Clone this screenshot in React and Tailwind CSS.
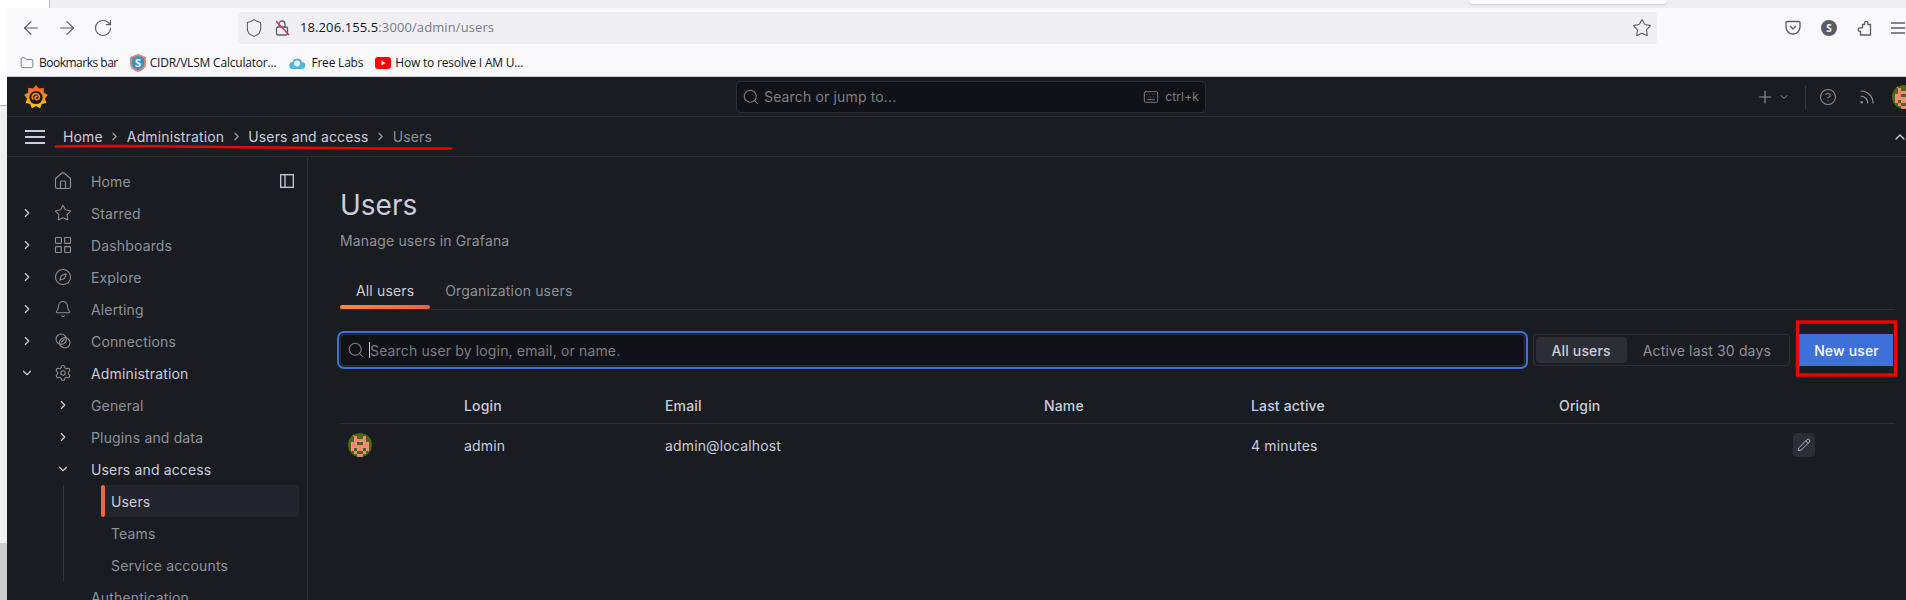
import {
  ArrowLeft,
  ArrowRight,
  Bell,
  ChevronDown,
  ChevronRight,
  ChevronUp,
  CircleHelp,
  Compass,
  Folder,
  Home,
  Keyboard,
  LayoutGrid,
  Pencil,
  Plus,
  RotateCw,
  Rss,
  Search,
  Settings,
  Shield,
  Star,
} from "lucide-react";

const IDENTICON = [
  "01000000",
  "00100100",
  "00111100",
  "01100110",
  "01111110",
  "01011010",
  "00100100",
  "00011000",
];

const Identicon = ({ className }) => (
  <svg viewBox="0 0 24 24" className={className}>
    <clipPath id="avatar-clip">
      <circle cx="12" cy="12" r="12" />
    </clipPath>
    <g clipPath="url(#avatar-clip)">
      <rect width="24" height="24" fill="#4a6a10" />
      {IDENTICON.map((row, y) =>
        row
          .split("")
          .map((cell, x) =>
            cell === "1" ? (
              <rect key={`${x}-${y}`} x={x * 3} y={y * 3} width="3" height="3" fill="#f4897f" />
            ) : null
          )
      )}
    </g>
  </svg>
);

const gearPoints = () => {
  const pts = [];
  for (let i = 0; i < 18; i++) {
    const r = i % 2 === 0 ? 12 : 9;
    const a = (i / 18) * Math.PI * 2 - Math.PI / 2;
    pts.push(`${12 + r * Math.cos(a)},${12 + r * Math.sin(a)}`);
  }
  return pts.join(" ");
};

const GrafanaLogo = () => (
  <svg viewBox="0 0 24 24" className="w-6 h-6 shrink-0">
    <defs>
      <linearGradient id="logo-grad" x1="0" y1="0" x2="0" y2="1">
        <stop offset="0" stopColor="#f05a28" />
        <stop offset="1" stopColor="#fbca0a" />
      </linearGradient>
    </defs>
    <polygon points={gearPoints()} fill="url(#logo-grad)" />
    <circle cx="12" cy="12.5" r="6.6" fill="#191c21" />
    <path
      d="M9 14.5a3.6 3.6 0 1 1 6.4-2.2c0 2.4-3.6 3.2-4.4 1a1.6 1.6 0 0 1 2.4-1.6"
      fill="none"
      stroke="#f5862a"
      strokeWidth="1.7"
    />
  </svg>
);

const ConnectionsIcon = () => (
  <svg viewBox="0 0 16 16" fill="none" stroke="currentColor" strokeWidth="1.1" className="w-4 h-4">
    <circle cx="6.2" cy="6.2" r="5.2" />
    <circle cx="9.8" cy="9.8" r="5.2" />
    <path d="M6 9.5l3.5-3.5" />
  </svg>
);

const NavRow = ({ icon: Icon, iconSize = 18, label, chevron, active, children }) => (
  <div className="flex items-center h-8">
    <div className="w-10 flex justify-center text-[#ccccdc]">
      {chevron === "right" && <ChevronRight size={14} />}
      {chevron === "down" && <ChevronDown size={14} />}
    </div>
    <div className="w-8 flex justify-center text-[#8e9099]">{Icon && <Icon size={iconSize} strokeWidth={1.4} />}</div>
    <span className={`ml-3 ${active ? "text-[#ccccdc]" : "text-[#8f9199]"}`}>{label}</span>
    {children}
  </div>
);

const SubRow = ({ label, chevron, active }) => (
  <div className="flex items-center h-8 pl-10">
    <div className="w-8 flex justify-center text-[#ccccdc]">
      {chevron === "right" && <ChevronRight size={14} />}
      {chevron === "down" && <ChevronDown size={14} />}
    </div>
    <span className={`ml-3 ${active ? "text-[#ccccdc]" : "text-[#8f9199]"}`}>{label}</span>
  </div>
);

const Crumb = ({ children }) => (
  <>
    <span>{children}</span>
    <span className="w-6 flex justify-center text-[#a0a2ab]">
      <ChevronRight size={13} />
    </span>
  </>
);

const BrowserChrome = () => (
  <div className="h-[77px] shrink-0 bg-[#f9f9fb] border-b border-[#cfcfd8] text-[#15141a] font-['Open_Sans',sans-serif]">
    <div className="h-2 bg-[#f0f0f4] flex">
      <div className="w-[43px] h-2 bg-white border-r border-[#b8b8b8]" />
      <div className="ml-[1419px] w-[198px] h-1 bg-white rounded-b shadow" />
    </div>
    <div className="flex items-center h-9 pt-1">
      <div className="flex items-center pl-[6px] text-[#5b5b66]">
        <div className="w-9 flex justify-center">
          <ArrowLeft size={22} strokeWidth={1.3} />
        </div>
        <div className="w-9 flex justify-center">
          <ArrowRight size={22} strokeWidth={1.3} />
        </div>
        <div className="w-9 flex justify-center">
          <RotateCw size={20} strokeWidth={1.4} />
        </div>
      </div>
      <div className="ml-[117px] w-[1421px] h-8 rounded bg-[#f0f0f4] flex items-center pl-[6px] pr-[5px]">
        <Shield size={20} strokeWidth={1.3} className="text-[#5b5b66]" />
        <svg viewBox="0 0 16 16" fill="none" className="w-4 h-4 ml-[10px]">
          <rect x="2.5" y="7" width="11" height="8" rx="1.5" stroke="#5b5b66" strokeWidth="1.3" />
          <path d="M5 7V4a3 3 0 0 1 6 0v3" stroke="#5b5b66" strokeWidth="1.3" />
          <path d="M2 1l13 14" stroke="#e22850" strokeWidth="1.3" />
        </svg>
        <span className="ml-[10px] text-[13px] tracking-[0.1px]">
          18.206.155.5<span className="text-[#7a7a85]">:3000/admin/users</span>
        </span>
        <Star size={20} strokeWidth={1.3} className="ml-auto text-[#5b5b66]" />
      </div>
      <div className="ml-[128px] flex items-center text-[#5b5b66]">
        <svg viewBox="0 0 16 16" fill="none" stroke="currentColor" strokeWidth="1.3" className="w-4 h-4">
          <path d="M2 1.5h12a1 1 0 0 1 1 1V7a7 7 0 0 1-14 0V2.5a1 1 0 0 1 1-1z" />
          <path d="M5 6l3 3 3-3" />
        </svg>
        <div className="ml-5 w-4 h-4 rounded-full bg-[#5b5b66] flex items-center justify-center text-white text-[10px] font-bold">
          S
        </div>
        <svg viewBox="0 0 16 16" fill="none" stroke="currentColor" strokeWidth="1.3" className="w-4 h-4 ml-5">
          <path d="M5.5 4.5H7.5V3a1.7 1.7 0 0 1 3.4 0V4.5H13.5V15H3.5V11.5H3a1.8 1.8 0 0 1 0-3.6h2.5z" />
        </svg>
        <svg viewBox="0 0 16 16" stroke="currentColor" strokeWidth="1.3" className="w-4 h-4 ml-[17px]">
          <path d="M1 3h14M1 8h14M1 13h14" />
        </svg>
      </div>
    </div>
    <div className="flex items-center h-8 pl-[13px] pt-[5px] text-[12px] tracking-[-0.2px]">
      <Folder size={14} strokeWidth={1.3} className="text-[#5b5b66]" />
      <span className="ml-[5px] tracking-[-0.5px]">Bookmarks bar</span>
      <svg viewBox="0 0 16 18" className="w-4 h-[18px] ml-3">
        <path d="M8 0l8 3v7c0 4-4 7-8 8-4-1-8-4-8-8V3z" fill="#cf8a80" />
        <path d="M2 4l6-2 6 2v6c0 3-3 5-6 6-3-1-6-3-6-6z" fill="#3f8fc4" />
        <text x="8" y="13" textAnchor="middle" fontSize="11" fontWeight="700" fill="#fff">
          S
        </text>
      </svg>
      <span className="ml-1">CIDR/VLSM Calculator...</span>
      <svg viewBox="0 0 16 14" className="w-4 h-[14px] ml-[13px]">
        <path d="M4 13a3.5 3.5 0 0 1-.5-7A5 5 0 0 1 13 6a3.5 3.5 0 0 1-.5 7z" fill="#4fb3e0" />
        <circle cx="8" cy="7.5" r="3" fill="#e6f5fb" />
      </svg>
      <span className="ml-[6px]">Free Labs</span>
      <svg viewBox="0 0 16 14" className="w-4 h-[14px] ml-3">
        <rect width="16" height="12" y="1" rx="3" fill="#ff0000" />
        <path d="M6.5 4.5v5l4-2.5z" fill="#fff" />
      </svg>
      <span className="ml-1">How to resolve I AM U...</span>
    </div>
  </div>
);

const GrafanaHeader = () => (
  <>
    <div className="h-10 shrink-0 flex items-center border-b border-[#2c2f34]">
      <div className="w-[729px] pl-[17px]">
        <GrafanaLogo />
      </div>
      <div className="w-[470px] h-8 bg-[#111217] border border-[#2c2f34] rounded-sm flex items-center pl-[5px] pr-[6px] text-[#7c7e86]">
        <Search size={18} strokeWidth={1.4} />
        <span className="ml-1">Search or jump to...</span>
        <Keyboard size={16} strokeWidth={1.4} className="ml-auto" />
        <span className="ml-1.5 text-[12px]">ctrl+k</span>
      </div>
      <div className="ml-auto flex items-center text-[#8e9099]">
        <Plus size={20} strokeWidth={1.4} />
        <ChevronDown size={12} className="ml-[3px]" />
        <div className="w-px h-6 bg-[#34373c] ml-[15px]" />
        <CircleHelp size={18} strokeWidth={1.4} className="ml-[13px]" />
        <Rss size={18} strokeWidth={1.6} className="ml-[21px]" />
        <div className="w-[14px] h-6 ml-4 overflow-hidden">
          <Identicon className="w-6 h-6 max-w-none" />
        </div>
      </div>
    </div>
    <div className="h-10 shrink-0 flex items-center border-b border-[#2c2f34] text-[#ccccdc]">
      <svg viewBox="0 0 20 14" className="w-5 h-[14px] ml-[18px] mr-[18px]" fill="#ccccdc">
        <rect width="20" height="2" />
        <rect y="6" width="20" height="2" />
        <rect y="12" width="20" height="2" />
      </svg>
      <Crumb>Home</Crumb>
      <Crumb>Administration</Crumb>
      <Crumb>Users and access</Crumb>
      <span className="text-[#8e9099]">Users</span>
      <ChevronUp size={16} className="ml-auto -mr-[2px] text-[#ccccdc]" />
    </div>
  </>
);

const Sidebar = () => (
  <div className="w-[301px] shrink-0 border-r border-[#2c2f34] pt-2 overflow-hidden">
    <NavRow icon={Home} iconSize={20} label="Home">
      <svg viewBox="0 0 14 14" fill="none" stroke="#ccccdc" strokeWidth="1.3" className="w-[14px] h-[14px] ml-auto mr-[13px]">
        <rect x="0.7" y="0.7" width="12.6" height="12.6" />
        <path d="M5 1v12" />
      </svg>
    </NavRow>
    <NavRow icon={Star} label="Starred" chevron="right" />
    <NavRow icon={LayoutGrid} iconSize={20} label="Dashboards" chevron="right" />
    <NavRow icon={Compass} label="Explore" chevron="right" />
    <NavRow icon={Bell} label="Alerting" chevron="right" />
    <NavRow icon={ConnectionsIcon} label="Connections" chevron="right" />
    <NavRow icon={Settings} label="Administration" chevron="down" active />
    <SubRow label="General" chevron="right" />
    <SubRow label="Plugins and data" chevron="right" />
    <SubRow label="Users and access" chevron="down" active />
    <div className="ml-[56px] border-l border-[#33363b] pl-[37px]">
      <div className="flex items-center h-8 w-[198px] bg-[#22252b] rounded-sm text-[#ccccdc]">
        <div className="w-1 h-8 rounded-sm bg-[#f2663a]" />
        <span className="ml-[6px]">Users</span>
      </div>
      <div className="flex items-center h-8 pl-[10px] text-[#8f9199]">Teams</div>
      <div className="flex items-center h-8 pl-[10px] text-[#8f9199]">Service accounts</div>
    </div>
    <div className="flex items-center h-8 pl-[84px] text-[#8f9199]">Authentication</div>
  </div>
);

const UsersPage = () => (
  <div className="flex-1 min-w-0 pl-8 pr-[11px] pt-[30px]">
    <h1 className="text-[28px] leading-9 text-[#ccccdc] tracking-normal">Users</h1>
    <p className="mt-2 leading-5 text-[#8f9199]">Manage users in Grafana</p>

    <div className="mt-[18px] flex border-b border-[#2c2f34] h-[41px]">
      <div>
        <div className="pt-3 px-4 leading-5 text-[#ccccdc]">All users</div>
        <div className="mt-1 h-1 rounded-sm bg-gradient-to-r from-[#ff8833] to-[#f55f3e]" />
      </div>
      <div className="pt-3 px-[15px] leading-5 text-[#8f9199]">Organization users</div>
    </div>

    <div className="mt-6 pr-[2px] flex items-center h-8">
      <div className="flex-1 h-8 bg-[#111217] border border-[#2c2f34] rounded-sm outline-2 outline-offset-1 outline-[#3d71d9] flex items-center pl-[6px] text-[#7c7e86]">
        <Search size={18} strokeWidth={1.4} />
        <div className="ml-1 w-px h-4 bg-[#ccccdc]" />
        <span>Search user by login, email, or name.</span>
      </div>
      <div className="ml-2 h-8 border border-[#2c2f34] rounded-sm p-0.5 flex items-center">
        <div className="h-[26px] px-4 flex items-center bg-[#2b2e34] rounded-sm text-[#ccccdc] font-medium">All users</div>
        <div className="h-[26px] px-4 flex items-center text-[#8f9199]">Active last 30 days</div>
      </div>
      <button className="ml-[9px] h-8 w-[94px] pl-px bg-[#3d71d9] text-white font-medium flex items-center justify-center">
        New user
      </button>
    </div>

    <div className="mt-[18px] h-10 pt-1 grid grid-cols-[124px_201px_379px_207px_308px_234px_1fr] items-center border-b border-[#2c2f34] text-[#ccccdc] font-medium">
      <div />
      <div>Login</div>
      <div>Email</div>
      <div>Name</div>
      <div>Last active</div>
      <div>Origin</div>
      <div />
    </div>
    <div className="h-[42px] grid grid-cols-[124px_201px_379px_207px_308px_234px_1fr] items-center text-[#ccccdc]">
      <div className="pl-2">
        <Identicon className="w-6 h-6" />
      </div>
      <div>admin</div>
      <div>admin@localhost</div>
      <div />
      <div>4 minutes</div>
      <div />
      <div className="w-[22px] h-6 rounded-sm bg-[#2b2e34] flex items-center justify-center text-[#ccccdc]">
        <Pencil size={14} strokeWidth={1.4} />
      </div>
    </div>
  </div>
);

const App = () => {
  return (
    <div className="relative w-[1906px] h-[600px] overflow-hidden flex bg-[#f0f0f0]">
      <div className="w-[7px] shrink-0 flex flex-col">
        <div className="h-[106px] bg-white border-b border-[#b8b8b8]" />
        <div className="flex-1 bg-[#f0f0f0]" />
        <div className="h-[57px] bg-[#cdcdcd]" />
      </div>

      <div className="flex-1 min-w-0 flex flex-col">
        <BrowserChrome />
        <div className="flex-1 min-h-0 flex flex-col bg-[#191c21] text-[14px] tracking-[0.15px] font-['Inter',sans-serif]">
          <GrafanaHeader />
          <div className="flex-1 min-h-0 flex">
            <Sidebar />
            <UsersPage />
          </div>
        </div>
      </div>

      {/* red marks drawn over the screenshot */}
      <svg viewBox="0 0 1906 600" className="absolute inset-0 w-[1906px] h-[600px] pointer-events-none" fill="none">
        <path d="M56 146.5C120 145 200 147 280 147.5S400 149 451 148.5" stroke="#f00000" strokeWidth="2.5" strokeLinecap="round" />
        <rect x="1797.5" y="322" width="98" height="53" stroke="#f00000" strokeWidth="3.5" />
      </svg>
    </div>
  );
};

export default App;
